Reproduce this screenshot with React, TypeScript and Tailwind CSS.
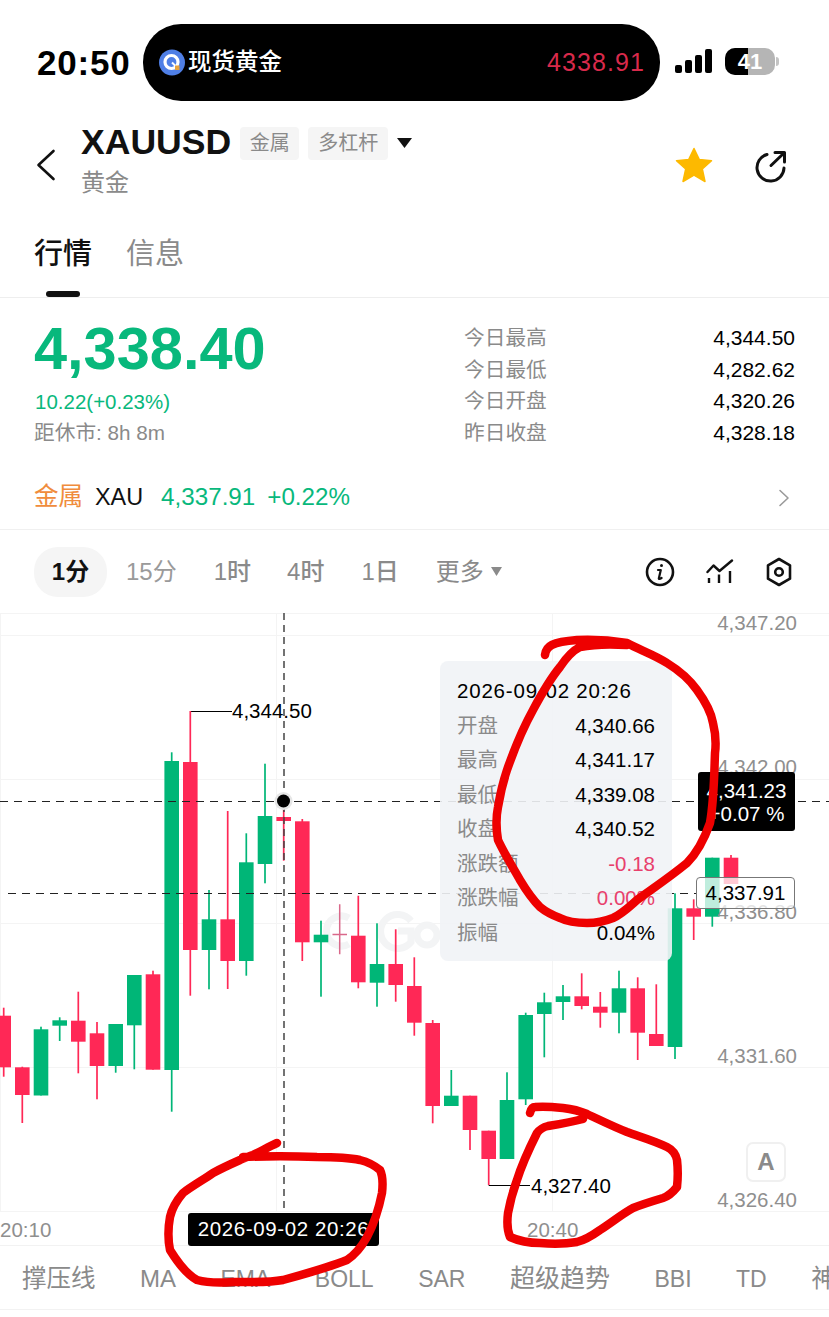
const SANS = "font-['Liberation_Sans','Noto_Sans_CJK_SC',sans-serif]";

const GREEN = "#00b677";
const RED = "#ff2856";

// x, up (green), wick top, body top, body bottom, wick bottom
const CANDLES: [number, boolean, number, number, number, number][] = [
  [3.7, false, 1007.7, 1015.7, 1067.3, 1076.7],
  [22.3, false, 1066.7, 1067.3, 1095, 1123],
  [41, true, 1026.7, 1029.3, 1095.5, 1095.5],
  [59.7, true, 1017.3, 1020.3, 1025.7, 1041],
  [78.3, false, 991.7, 1020.7, 1041.7, 1073.3],
  [97, false, 1022, 1033.3, 1066, 1099.3],
  [115.7, true, 1024, 1024, 1066, 1072.7],
  [134.3, true, 975, 975, 1025.3, 1069.3],
  [153, false, 970.7, 974.3, 1069.7, 1069.7],
  [171.7, true, 752.3, 761, 1070, 1111.7],
  [190.3, false, 711, 762, 950, 995.7],
  [209, true, 890, 919.3, 950, 989.3],
  [227.7, false, 811, 919.3, 961, 989],
  [246.3, true, 833.3, 862.3, 961, 975.7],
  [265, true, 763.7, 816, 864, 883.3],
  [283.7, false, 806.7, 817, 821, 860.7],
  [302.3, false, 819, 821.3, 942.3, 961],
  [321, true, 920.7, 934.7, 942.3, 996.7],
  [358.3, false, 895.7, 935.7, 982.3, 988.3],
  [377, true, 923.3, 964, 982.7, 1006.7],
  [395.7, false, 929.3, 964, 985, 1001.7],
  [414.3, false, 957.3, 986, 1022.7, 1035.7],
  [432.7, false, 1020, 1023, 1106, 1123.3],
  [451.3, true, 1070, 1095.7, 1106, 1106],
  [470, false, 1095.7, 1095.7, 1130, 1150],
  [488.7, false, 1130.7, 1130.7, 1159, 1185],
  [507, true, 1072.3, 1100, 1159, 1159],
  [525.7, true, 1012.7, 1015, 1099.3, 1105],
  [544.3, true, 992.7, 1002.3, 1014, 1057.3],
  [563, true, 985, 996.3, 1002, 1020],
  [581.7, false, 973.3, 996.3, 1006, 1009.3],
  [600.3, false, 992, 1006.7, 1012.7, 1027.7],
  [619, true, 970.7, 988.3, 1012.7, 1033.3],
  [637.7, false, 977.3, 988.3, 1032.7, 1060],
  [656.3, false, 984.3, 1034, 1046, 1046],
  [675, true, 893.3, 908.3, 1047, 1059],
  [693.7, false, 899.3, 908.3, 916.7, 940],
  [712.3, true, 857.7, 857.7, 916.7, 926.7],
  [731, false, 855, 857.7, 884, 884],
];

const TOOLTIP_ROWS = [
  { label: "开盘", value: "4,340.66", color: "text-black" },
  { label: "最高", value: "4,341.17", color: "text-black" },
  { label: "最低", value: "4,339.08", color: "text-black" },
  { label: "收盘", value: "4,340.52", color: "text-black" },
  { label: "涨跌额", value: "-0.18", color: "text-[#e8406c]" },
  { label: "涨跌幅", value: "0.00%", color: "text-[#e8406c]" },
  { label: "振幅", value: "0.04%", color: "text-black" },
];

const STATS = [
  { label: "今日最高", value: "4,344.50" },
  { label: "今日最低", value: "4,282.62" },
  { label: "今日开盘", value: "4,320.26" },
  { label: "昨日收盘", value: "4,328.18" },
];

const INDICATORS = [
  { name: "撑压线", size: "text-[24.5px]" },
  { name: "MA", size: "text-[24px]" },
  { name: "EMA", size: "text-[23px]" },
  { name: "BOLL", size: "text-[23px]" },
  { name: "SAR", size: "text-[23px]" },
  { name: "超级趋势", size: "text-[25px]" },
  { name: "BBI", size: "text-[23px]" },
  { name: "TD", size: "text-[23px]" },
  { name: "神奇九转", size: "text-[24.5px]" },
];

function StatusBar() {
  return (
    <div className="flex h-[125px] items-start pl-[37px] pt-[24px]">
      <span className="mt-[17px] w-[106px] text-[35px] leading-[44px] font-bold tracking-[0.8px] text-black">20:50</span>
      <div className="flex h-[77px] w-[517px] items-center rounded-[38px] bg-black pl-[16px] pr-[15px]">
        <svg width="26" height="27" viewBox="0 0 26 27">
          <circle cx="13" cy="13.5" r="13" fill="#4f7fe6" />
          <circle cx="12.5" cy="13" r="6.5" fill="none" stroke="#fff" strokeWidth="3.2" />
          <path d="M13 13.5 L19 19.5" stroke="#fff" strokeWidth="2" />
          <rect x="16" y="16.5" width="4.5" height="4.5" fill="#e8a33c" />
        </svg>
        <span className="ml-[3px] text-[23.5px] leading-none font-medium text-white">现货黄金</span>
        <span className="ml-auto text-[25px] leading-none tracking-[1.1px] text-[#d92a4b]">4338.91</span>
      </div>
      <svg className="ml-[15px] mt-[25px]" width="38" height="25" viewBox="0 0 38 25" fill="#000">
        <rect x="0" y="16" width="7" height="8" rx="2" />
        <rect x="10" y="11" width="7" height="13" rx="2" />
        <rect x="20" y="6" width="7" height="18" rx="2" />
        <rect x="30" y="0" width="7" height="24" rx="2" />
      </svg>
      <div className="relative ml-[12px] mt-[24px] flex h-[27px] w-[50px] items-center justify-center overflow-hidden rounded-[10px] bg-[#b5b5b5]">
        <div className="absolute inset-y-0 left-0 w-[23px] bg-black" />
        <span className="relative text-[22px] leading-none font-bold text-white">41</span>
      </div>
      <div className="ml-[1px] mt-[33px] h-[9px] w-[3px] rounded-r-full bg-[#c4c4c4]" />
    </div>
  );
}

function Header() {
  return (
    <div className="flex h-[87px] items-start">
      <svg className="ml-[36px] mt-[24px]" width="20" height="32" viewBox="0 0 20 32" fill="none" stroke="#111" strokeWidth="2.6" strokeLinecap="round" strokeLinejoin="round">
        <path d="M17.5 2 L2.5 16 L17.5 30" />
      </svg>
      <div className="ml-[25px] flex flex-col">
        <div className="flex h-[36px] items-center">
          <span className="text-[35.6px] leading-none font-bold text-[#111]">XAUUSD</span>
          <span className="ml-[9px] flex h-[33px] w-[59px] items-center justify-center rounded-[4px] bg-[#f5f5f5] text-[20px] text-[#8a8a8a]">金属</span>
          <span className="ml-[9px] flex h-[33px] w-[80px] items-center justify-center rounded-[4px] bg-[#f5f5f5] text-[20px] text-[#8a8a8a]">多杠杆</span>
          <svg className="ml-[9px]" width="15" height="10" viewBox="0 0 15 10" fill="#111">
            <path d="M0 0 H15 L7.5 10 Z" />
          </svg>
        </div>
        <span className="mt-[8px] text-[24px] leading-[28px] text-[#8a8a8a]">黄金</span>
      </div>
      <svg className="ml-auto mt-[22px]" width="38" height="36" viewBox="0 0 38 36" fill="#fdb900">
        <path d="M19 1.5 L24.2 12.4 L36.5 13.8 L27.3 22 L30 34.5 L19 28.2 L8 34.5 L10.7 22 L1.5 13.8 L13.8 12.4 Z" stroke="#fdb900" strokeWidth="1.5" strokeLinejoin="round" />
      </svg>
      <svg className="ml-[41px] mr-[42px] mt-[25px]" width="33" height="33" viewBox="0 0 33 33" fill="none" stroke="#111" strokeWidth="3" strokeLinecap="round" strokeLinejoin="round">
        <path d="M13 4.5 A13.5 13.5 0 1 0 30 18" />
        <path d="M17 15.5 L30 3 M21 2.5 H30.5 V12" />
      </svg>
    </div>
  );
}

function Tabs() {
  return (
    <div className="relative flex h-[86px] gap-[34px] border-b border-[#eeeeee] pl-[34px] pt-[21px]">
      <span className="text-[29px] leading-[42px] font-medium text-[#111]">行情</span>
      <span className="text-[29px] leading-[42px] text-[#8a8a8a]">信息</span>
      <div className="absolute bottom-0 left-[46px] h-[6px] w-[34px] rounded-[3px] bg-[#111]" />
    </div>
  );
}

function Quote() {
  return (
    <div className="flex h-[165px] pl-[34px] pr-[34px]">
      <div className="flex flex-col">
        <span className="mt-[21px] text-[59.5px] leading-[60px] font-bold text-[#08b87c]">4,338.40</span>
        <span className="ml-[1px] mt-[11px] text-[20.5px] leading-[24px] text-[#08b87c]">10.22(+0.23%)</span>
        <span className="mt-[7px] text-[20.7px] leading-[24px] text-[#8a8a8a]">距休市: 8h 8m</span>
      </div>
      <div className="ml-auto mt-[28px] flex w-[331px] flex-col gap-[7.5px]">
        {STATS.map((s) => (
          <div key={s.label} className="flex h-[24px] items-center justify-between">
            <span className="text-[20.7px] text-[#8a8a8a]">{s.label}</span>
            <span className="text-[21px] font-medium text-black">{s.value}</span>
          </div>
        ))}
      </div>
    </div>
  );
}

function SectorRow() {
  return (
    <div className="flex h-[67px] items-center border-b border-[#f0f0f0] pl-[34px] pr-[39px] pt-[3px]">
      <span className="text-[24.5px] text-[#f08c3c]">金属</span>
      <span className="ml-[12px] text-[23.4px] text-[#111]">XAU</span>
      <span className="ml-[18px] text-[24.2px] text-[#08b87c]">4,337.91</span>
      <span className="ml-[12px] text-[24.2px] text-[#08b87c]">+0.22%</span>
      <svg className="ml-auto" width="12" height="18" viewBox="0 0 12 18" fill="none" stroke="#9a9a9a" strokeWidth="1.6" strokeLinecap="round" strokeLinejoin="round">
        <path d="M2 1.5 L10 9 L2 16.5" />
      </svg>
    </div>
  );
}

function PeriodRow() {
  return (
    <div className="flex h-[83px] items-center pl-[34px] pr-[37px]">
      <span className="flex h-[50px] w-[73px] items-center justify-center rounded-[24px] bg-[#f5f5f5] text-[24px] font-bold text-[#111]">1分</span>
      <span className="ml-[19px] text-[24px] text-[#9a9a9a]">15分</span>
      <span className="ml-[37px] text-[24px] font-medium text-[#8a8a8a]">1时</span>
      <span className="ml-[36px] text-[24px] font-medium text-[#8a8a8a]">4时</span>
      <span className="ml-[37px] text-[24px] font-medium text-[#8a8a8a]">1日</span>
      <span className="ml-[37px] text-[24px] text-[#8a8a8a]">更多</span>
      <svg className="ml-[7px]" width="11" height="9" viewBox="0 0 11 9" fill="#8a8a8a">
        <path d="M0 0 H11 L5.5 9 Z" />
      </svg>
      <svg className="ml-auto" width="30" height="30" viewBox="0 0 30 30" fill="none" stroke="#111" strokeWidth="2.6">
        <circle cx="15" cy="15" r="13" />
        <path d="M13 13 H15.8 L13.8 21.5 Q13.6 22.6 16.6 21" strokeWidth="2.2" strokeLinecap="round" strokeLinejoin="round" />
        <circle cx="16.5" cy="8.5" r="1.5" fill="#111" stroke="none" />
      </svg>
      <svg className="ml-[31px]" width="28" height="26" viewBox="0 0 28 26" fill="none" stroke="#111" strokeWidth="2.4" strokeLinecap="round" strokeLinejoin="round">
        <path d="M1.5 13 L7.5 6.5 L13.5 12 L26 1.5" />
        <path d="M3 19 V24 M13 15.5 V24 M24 12 V24" strokeLinecap="butt" />
      </svg>
      <svg className="ml-[32px]" width="26" height="30" viewBox="0 0 26 30" fill="none" stroke="#111" strokeWidth="2.6" strokeLinejoin="round">
        <path d="M13 2 L24 8.3 V21.7 L13 28 L2 21.7 V8.3 Z" />
        <circle cx="13" cy="15" r="3.8" />
      </svg>
    </div>
  );
}

function CandleChart() {
  return (
    <svg className="absolute inset-0" width="829" height="600" viewBox="0 613 829 600">
      {/* grid */}
      <g stroke="#f4f4f4" strokeWidth="1">
        <path d="M0 613.5 H829 M0 635.5 H829 M0 779.5 H829 M0 923.5 H829 M0 1067.5 H829 M0 1211.5 H829" />
        <path d="M0.5 613 V1212 M276.5 613 V1212 M552.5 613 V1212" />
      </g>
      {/* watermark */}
      <g fill="none" stroke="#f3f4f5" strokeWidth="7">
        <path d="M349 918 A15 15 0 1 0 349 944" />
        <path d="M411 921 A17 17 0 1 0 411 942 V931 H398" />
        <circle cx="427" cy="935" r="10" />
      </g>
      {/* the low and high markers */}
      <path d="M190 711.5 H232 M488.7 1185.5 H530" stroke="#000" strokeWidth="1" fill="none" />
      {/* doji */}
      <path d="M339.7 904.3 V954.3 M332.5 934.5 H347" stroke="#d9688a" strokeWidth="1.5" />
      {CANDLES.map(([x, up, wt, bt, bb, wb]) => (
        <g key={x} fill={up ? GREEN : RED}>
          <rect x={x - 0.85} y={wt} width="1.7" height={wb - wt} />
          <rect x={x - 7.3} y={bt} width="14.6" height={bb - bt} />
        </g>
      ))}
      {/* crosshair and last price */}
      <path d="M0 801.5 H829" stroke="#222" strokeWidth="1" strokeDasharray="8 6" />
      <path d="M8 893.5 H697" stroke="#222" strokeWidth="1" strokeDasharray="8 6" />
      <path d="M284 613 V1213" stroke="#444" strokeWidth="1.5" strokeDasharray="7 5" />
      <circle cx="283.5" cy="801" r="9" fill="#e6e6e6" />
      <circle cx="283.5" cy="801" r="6.5" fill="#000" />
    </svg>
  );
}

function Chart() {
  return (
    <div className="relative h-[600px] w-full text-[20.5px]">
      <CandleChart />

      <span className="absolute right-[32px] top-[-2px] leading-[24px] text-[#8f8f8f]">4,347.20</span>
      <span className="absolute right-[32px] top-[142px] leading-[24px] text-[#8f8f8f]">4,342.00</span>
      <span className="absolute right-[32px] top-[287px] leading-[24px] text-[#8f8f8f]">4,336.80</span>
      <span className="absolute right-[32px] top-[431px] leading-[24px] text-[#8f8f8f]">4,331.60</span>
      <span className="absolute right-[32px] top-[575px] leading-[24px] text-[#8f8f8f]">4,326.40</span>

      <span className="absolute left-[232px] top-[86px] leading-[24px] text-black">4,344.50</span>
      <span className="absolute left-[531px] top-[561px] leading-[24px] text-black">4,327.40</span>

      <div className="absolute left-[440px] top-[48px] flex h-[300px] w-[232px] flex-col rounded-[8px] bg-[#f1f3f6]/90 px-[17px] pt-[17px]">
        <span className="h-[26px] text-[20.5px] leading-[26px] tracking-[0.8px] text-black">2026-09-02 20:26</span>
        {TOOLTIP_ROWS.map((r) => (
          <div key={r.label} className="mt-[8.5px] flex h-[26px] items-center justify-between leading-[26px]">
            <span className="text-[#8a8a8a]">{r.label}</span>
            <span className={r.color}>{r.value}</span>
          </div>
        ))}
      </div>

      <div className="absolute left-[698px] top-[159px] flex h-[59px] w-[97px] flex-col items-center justify-center rounded-[3px] bg-black leading-[23px] text-white">
        <span>4,341.23</span>
        <span>+0.07 %</span>
      </div>
      <div className="absolute left-[696px] top-[264px] flex h-[32px] w-[99px] items-center justify-center rounded-[4px] border border-[#777] bg-white/75 text-black">
        4,337.91
      </div>

      <div className="absolute left-[746px] top-[529px] flex h-[40px] w-[40px] items-center justify-center rounded-[7px] border-2 border-[#f0f0f0] bg-white text-[24px] font-bold text-[#8a8a8a]">
        A
      </div>
    </div>
  );
}

function TimeAxis() {
  return (
    <div className="relative h-[33px] border-b border-[#f2f2f2]">
      <span className="absolute left-0 top-[4px] leading-[26px] text-[20.5px] text-[#8f8f8f]">20:10</span>
      <span className="absolute left-[527px] top-[4px] leading-[26px] text-[20.5px] text-[#8f8f8f]">20:40</span>
      <div className="absolute left-[188px] top-0 flex h-[33px] w-[191px] items-center justify-center rounded-[3px] bg-black text-[20.5px] tracking-[0.6px] text-white">
        2026-09-02 20:26
      </div>
    </div>
  );
}

function IndicatorBar() {
  return (
    <div className="flex h-[64px] items-center gap-[44.5px] overflow-hidden whitespace-nowrap border-b border-[#f2f2f2] pl-[22px] pt-[3px]">
      {INDICATORS.map((item) => (
        <span key={item.name} className={`${item.size} text-[#8a8a8a]`}>{item.name}</span>
      ))}
    </div>
  );
}

function Scribbles() {
  return (
    <svg className="pointer-events-none absolute inset-0" width="829" height="1317" viewBox="0 0 829 1317" fill="none" stroke="#ee0000" strokeWidth="8.5" strokeLinecap="round" strokeLinejoin="round">
      <path d="M545 655 C546 646 552 642 577 640 C600 639 615 641 627 643 C640 650 655 655 667 663 C680 671 690 680 697 690 C705 701 711 711 713 723 C716 735 716 745 715 753 C714 780 714 800 710 823 C704 840 698 852 687 863 C670 877 652 889 637 900 C628 908 622 914 613 918 C603 922 597 923 587 923 C577 923 568 922 560 918 C552 915 546 912 540 907 C532 899 526 890 520 880 C512 866 504 853 498 840 C496 828 496 817 498 807 C500 795 503 782 507 770 C514 750 523 728 533 710 C541 695 551 678 560 667 C566 658 572 651 580 647 C595 644 612 644 627 645" />
      <path d="M277 1143 C268 1147 260 1152 253 1155 C248 1157 244 1158 240 1160 C231 1164 222 1168 213 1173 C203 1180 192 1186 183 1193 C177 1200 172 1208 170 1217 C168 1228 168 1240 170 1250 C178 1263 186 1274 197 1280 C208 1283 220 1283 233 1282 C250 1282 267 1283 283 1280 C305 1274 327 1268 347 1260 C356 1254 362 1246 367 1237 C374 1224 379 1208 382 1193 C383 1184 383 1176 380 1170 C374 1165 368 1162 360 1160 C346 1157 332 1157 317 1157 C292 1156 268 1156 243 1157" />
      <path d="M530 1113 C531 1109 533 1107 535 1107 C545 1106 554 1107 563 1108 C572 1109 580 1111 587 1114 C600 1120 614 1127 627 1132 C641 1137 655 1141 667 1147 C673 1150 676 1155 677 1160 C678 1169 678 1178 677 1187 C673 1192 669 1196 663 1198 C653 1201 643 1204 633 1208 C622 1214 611 1223 600 1230 C593 1235 585 1240 577 1242 C565 1244 552 1244 540 1243 C530 1243 519 1241 510 1237 C507 1230 507 1221 508 1213 C510 1202 513 1191 517 1180 C522 1164 530 1147 537 1133 C540 1129 544 1127 548 1126 C560 1124 572 1122 583 1119" />
    </svg>
  );
}

export default function App() {
  return (
    <div className={`relative h-[1317px] w-[829px] overflow-hidden bg-white ${SANS}`}>
      <StatusBar />
      <Header />
      <Tabs />
      <Quote />
      <SectorRow />
      <PeriodRow />
      <Chart />
      <TimeAxis />
      <IndicatorBar />
      <Scribbles />
    </div>
  );
}
